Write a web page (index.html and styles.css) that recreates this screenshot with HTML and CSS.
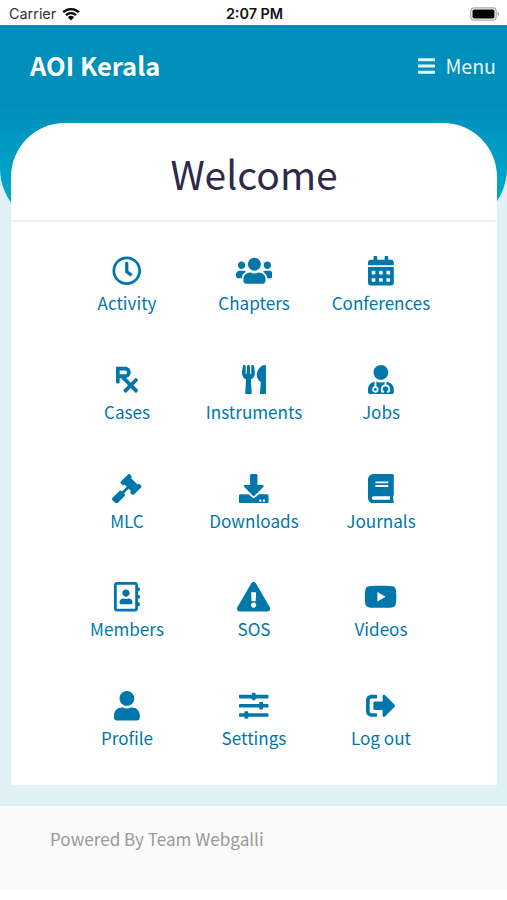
FILE: index.html
```
<!DOCTYPE html>
<html lang="en">
<head>
    <meta charset="UTF-8">
    <meta name="viewport" content="width=device-width, initial-scale=1.0">
    <title>AOI Kerala</title>
    <link rel="stylesheet" href="styles.css">
</head>
<body>
    <div class="status-bar">
        <div class="carrier">
            <span>Carrier</span>
            <svg class="wifi" viewBox="0 0 18 14">
                <path d="M1.2 5.2a11.2 11.2 0 0 1 15.6 0M4 8.2a7.2 7.2 0 0 1 10 0" fill="none" stroke="#000" stroke-width="2.3"/>
                <path d="M5.9 10.2a4.5 4.5 0 0 1 6.2 0L9 13.5z"/>
            </svg>
        </div>
        <div class="time">2:07 PM</div>
        <svg class="battery" viewBox="0 0 30 14">
            <rect x="0.8" y="0.8" width="25.4" height="12.4" rx="3.5" fill="#fff" stroke="#aaa" stroke-width="1.2"/>
            <rect x="2.5" y="2.4" width="22" height="9.2" rx="1.8"/>
            <path d="M27.6 4.8c2.2.6 2.2 3.8 0 4.4z" fill="#aaa"/>
        </svg>
    </div>

    <div class="page">
        <header class="header">
            <a class="brand">AOI Kerala</a>
            <a class="menu">
                <svg viewBox="0 0 448 512"><path d="M16 132h416c8.800 0 16-7.200 16-16V76c0-8.800-7.200-16-16-16H16C7.200 60 0 67.200 0 76v40c0 8.800 7.200 16 16 16zm0 160h416c8.800 0 16-7.200 16-16v-40c0-8.800-7.200-16-16-16H16c-8.800 0-16 7.200-16 16v40c0 8.800 7.200 16 16 16zm0 160h416c8.800 0 16-7.200 16-16v-40c0-8.800-7.200-16-16-16H16c-8.800 0-16 7.200-16 16v40c0 8.800 7.200 16 16 16z"/></svg>
                <span>Menu</span>
            </a>
        </header>

        <main class="card">
            <h1>Welcome</h1>
            <div class="grid">
                <a class="item">
                    <svg viewBox="0 0 512 512"><path d="M256 8C119 8 8 119 8 256s111 248 248 248 248-111 248-248S393 8 256 8zm0 448c-110.500 0-200-89.500-200-200S145.500 56 256 56s200 89.500 200 200-89.500 200-200 200zm61.800-104.400l-84.900-61.700c-3.100-2.300-4.900-5.900-4.900-9.700V116c0-6.600 5.400-12 12-12h32c6.600 0 12 5.400 12 12v141.700l66.800 48.600c5.400 3.900 6.500 11.400 2.600 16.800L334.600 349c-3.900 5.300-11.400 6.500-16.800 2.600z"/></svg>
                    <span>Activity</span>
                </a>
                <a class="item">
                    <svg viewBox="0 0 640 512"><path d="M96 224c35.300 0 64-28.700 64-64s-28.700-64-64-64-64 28.700-64 64 28.700 64 64 64zm448 0c35.300 0 64-28.700 64-64s-28.700-64-64-64-64 28.700-64 64 28.700 64 64 64zm32 32h-64c-17.600 0-33.500 7.100-45.100 18.600 40.300 22.100 68.900 62 75.100 109.400h66c17.700 0 32-14.300 32-32v-32c0-35.300-28.700-64-64-64zm-256 0c61.900 0 112-50.100 112-112S381.900 32 320 32 208 82.100 208 144s50.100 112 112 112zm76.800 32h-8.300c-20.800 10-43.900 16-68.500 16s-47.600-6-68.500-16h-8.300C179.600 288 128 339.600 128 403.200V432c0 26.500 21.500 48 48 48h288c26.500 0 48-21.500 48-48v-28.800c0-63.600-51.600-115.200-115.200-115.200zm-223.700-13.400C161.500 263.100 145.600 256 128 256H64c-35.300 0-64 28.700-64 64v32c0 17.700 14.300 32 32 32h65.900c6.300-47.400 34.900-87.300 75.200-109.400z"/></svg>
                    <span>Chapters</span>
                </a>
                <a class="item">
                    <svg viewBox="0 0 448 512"><path fill-rule="evenodd" d="M0 464c0 26.500 21.500 48 48 48h352c26.500 0 48-21.500 48-48V192H0v272zM76 256h40q12 0 12 12v40q0 12-12 12H76q-12 0-12-12v-40q0-12 12-12zm128 0h40q12 0 12 12v40q0 12-12 12h-40q-12 0-12-12v-40q0-12 12-12zm128 0h40q12 0 12 12v40q0 12-12 12h-40q-12 0-12-12v-40q0-12 12-12zM76 384h40q12 0 12 12v40q0 12-12 12H76q-12 0-12-12v-40q0-12 12-12zm128 0h40q12 0 12 12v40q0 12-12 12h-40q-12 0-12-12v-40q0-12 12-12zm128 0h40q12 0 12 12v40q0 12-12 12h-40q-12 0-12-12v-40q0-12 12-12zM400 64h-48V16c0-8.800-7.200-16-16-16h-32c-8.800 0-16 7.200-16 16v48H160V16c0-8.800-7.200-16-16-16h-32c-8.800 0-16 7.200-16 16v48H48C21.500 64 0 85.500 0 112v48h448v-48c0-26.500-21.500-48-48-48z"/></svg>
                    <span>Conferences</span>
                </a>
                <a class="item">
                    <svg viewBox="0 0 384 512"><path d="M301.300 352l78-78.100c6.300-6.200 6.300-16.300 0-22.600l-22.600-22.600c-6.300-6.300-16.400-6.300-22.600 0L256 306.700l-84-83.900c47.300-6 84-45.900 84-94.800 0-53-43-96-96-96H16C7.200 32 0 39.200 0 48v256c0 8.800 7.200 16 16 16h32c8.800 0 16-7.200 16-16v-80h18.700l128 128-78 78.100c-6.300 6.200-6.300 16.300 0 22.600l22.600 22.600c6.300 6.300 16.400 6.300 22.600 0l78.100-78 78.100 78c6.200 6.300 16.300 6.300 22.600 0l22.600-22.600c6.300-6.300 6.300-16.400 0-22.600L301.300 352zM64 96h96c17.600 0 32 14.400 32 32s-14.400 32-32 32H64V96z"/></svg>
                    <span>Cases</span>
                </a>
                <a class="item">
                    <svg viewBox="0 0 416 512"><path d="M207.900 15.200c.8 4.700 16.100 94.500 16.100 128.800 0 52.300-27.800 89.600-68.900 104.600L168 486.700c.7 13.700-10.200 25.300-24 25.300H80c-13.700 0-24.700-11.500-24-25.300l12.900-238.100C27.700 233.600 0 196.200 0 144 0 109.600 15.300 19.900 16.100 15.200 19.300-5.100 61.400-5.400 64 16.300v141.200c1.300 3.400 15.100 3.200 16 0 1.400-25.300 7.900-139.200 8-141.800 3.300-20.800 44.700-20.800 47.900 0 .2 2.700 6.600 116.500 8 141.800.9 3.200 14.800 3.400 16 0V16.300c2.600-21.600 44.800-21.400 48-1.100zm119.200 285.700l-15 185.100c-1.200 14 9.900 26 23.900 26h56c13.300 0 24-10.700 24-24V24c0-13.200-10.700-24-24-24-82.500 0-221.400 178.500-64.900 300.900z"/></svg>
                    <span>Instruments</span>
                </a>
                <a class="item">
                    <svg viewBox="0 0 448 512"><path d="M224 256c70.700 0 128-57.300 128-128S294.700 0 224 0 96 57.300 96 128s57.300 128 128 128zM104 424c0 13.300 10.700 24 24 24s24-10.700 24-24-10.700-24-24-24-24 10.700-24 24zm216-135.400v49c36.500 7.400 64 39.800 64 78.400v41.700c0 7.600-5.400 14.200-12.900 15.700l-32.200 6.400c-4.300.9-8.500-1.900-9.400-6.300l-3.100-15.700c-.9-4.300 1.900-8.600 6.300-9.400l19.300-3.900V416c0-62.800-96-65.100-96 1.900v26.700l19.300 3.900c4.300.9 7.100 5.100 6.300 9.400l-3.100 15.700c-.9 4.300-5.100 7.100-9.400 6.300l-31.200-4.200c-7.900-1.100-13.800-7.800-13.800-15.900V416c0-38.600 27.500-70.900 64-78.400v-45.200c-2.200.7-4.400 1.100-6.600 1.900-18 6.300-37.300 9.800-57.400 9.800s-39.400-3.500-57.400-9.800c-7.400-2.600-14.900-4.200-22.600-5.200v81.600c23.100 6.900 40 28.100 40 53.400 0 30.900-25.100 56-56 56s-56-25.100-56-56c0-25.300 16.900-46.500 40-53.400v-80.400C48.500 301 0 355.800 0 422.400v44.800C0 491.900 20.100 512 44.800 512h358.400c24.700 0 44.800-20.100 44.800-44.800v-44.800c0-72-56.800-130.300-128-133.800z"/></svg>
                    <span>Jobs</span>
                </a>
                <a class="item">
                    <svg viewBox="0 0 512 512"><path d="M505 199.400l-22.700-22.700c-9.300-9.300-24.500-9.300-33.900 0l-5.700 5.700L329.600 69.300l5.700-5.700c9.300-9.400 9.300-24.600 0-33.900L312.600 7c-9.300-9.300-24.500-9.300-33.900 0L154.200 131.500c-9.300 9.400-9.300 24.600 0 33.900l22.700 22.600c9.300 9.400 24.500 9.400 33.900 0l5.700-5.600 39.600 39.600-81.100 81-5.600-5.700c-12.500-12.500-32.800-12.500-45.300 0L9.400 412.100c-12.500 12.500-12.500 32.800 0 45.300l45.200 45.200c12.500 12.500 32.800 12.500 45.300 0l114.700-114.700c12.500-12.500 12.500-32.800 0-45.300l-5.600-5.600 81-81.100 39.600 39.600-5.700 5.700c-9.300 9.400-9.300 24.600 0 33.900l22.700 22.700c9.300 9.300 24.500 9.300 33.900 0L505 233.300c9.300-9.400 9.300-24.600 0-33.900z"/></svg>
                    <span>MLC</span>
                </a>
                <a class="item">
                    <svg viewBox="0 0 512 512"><path d="M216 0h80c13.300 0 24 10.700 24 24v168h87.700c17.800 0 26.700 21.500 14.100 34.100L269.700 378.300c-7.500 7.500-19.800 7.500-27.300 0L90.100 226.100c-12.600-12.600-3.700-34.100 14.100-34.100H192V24c0-13.300 10.700-24 24-24zm296 376v112c0 13.300-10.700 24-24 24H24c-13.300 0-24-10.700-24-24V376c0-13.300 10.700-24 24-24h146.700l49 49c20.100 20.100 52.500 20.100 72.600 0l49-49H488c13.300 0 24 10.700 24 24zm-124 88c0-11-9-20-20-20s-20 9-20 20 9 20 20 20 20-9 20-20zm64 0c0-11-9-20-20-20s-20 9-20 20 9 20 20 20 20-9 20-20z"/></svg>
                    <span>Downloads</span>
                </a>
                <a class="item">
                    <svg viewBox="0 0 448 512"><path d="M448 360V24c0-13.300-10.700-24-24-24H96C43 0 0 43 0 96v320c0 53 43 96 96 96h328c13.300 0 24-10.700 24-24v-16c0-7.500-3.500-14.300-8.900-18.700-4.200-15.400-4.200-59.300 0-74.700 5.400-4.300 8.900-11.100 8.900-18.600zM128 134c0-3.300 2.700-6 6-6h212c3.300 0 6 2.700 6 6v20c0 3.300-2.700 6-6 6H134c-3.300 0-6-2.700-6-6v-20zm0 64c0-3.300 2.700-6 6-6h212c3.300 0 6 2.700 6 6v20c0 3.300-2.700 6-6 6H134c-3.300 0-6-2.700-6-6v-20zm253.400 250H96c-17.700 0-32-14.300-32-32 0-17.600 14.400-32 32-32h285.400c-1.900 17.100-1.900 46.900 0 64z"/></svg>
                    <span>Journals</span>
                </a>
                <a class="item">
                    <svg viewBox="0 0 448 512"><path d="M436 160c6.600 0 12-5.400 12-12v-40c0-6.600-5.400-12-12-12h-20V48c0-26.500-21.500-48-48-48H48C21.500 0 0 21.500 0 48v416c0 26.500 21.500 48 48 48h320c26.500 0 48-21.500 48-48v-48h20c6.600 0 12-5.400 12-12v-40c0-6.600-5.400-12-12-12h-20v-64h20c6.600 0 12-5.400 12-12v-40c0-6.600-5.400-12-12-12h-20v-64h20zm-68 304H48V48h320v416zM208 256c35.300 0 64-28.700 64-64s-28.700-64-64-64-64 28.700-64 64 28.700 64 64 64zm-89.600 128h179.200c12.400 0 22.400-8.600 22.400-19.200v-19.200c0-31.800-30.100-57.600-67.200-57.600-10.800 0-18.700 8-44.800 8-26.900 0-33.400-8-44.800-8-37.100 0-67.200 25.800-67.200 57.600v19.200c0 10.600 10 19.200 22.400 19.200z"/></svg>
                    <span>Members</span>
                </a>
                <a class="item">
                    <svg viewBox="0 0 576 512"><path d="M569.500 440c18.500 32-4.700 72-41.600 72H48.100c-37 0-60-40.100-41.600-72L246.400 24c18.500-32 64.700-32 83.200 0l239.900 416zM288 354c-25.400 0-46 20.600-46 46s20.600 46 46 46 46-20.600 46-46-20.600-46-46-46zm-43.700-165.300l7.400 136c.4 6.300 5.700 11.300 12 11.300h48.600c6.300 0 11.600-5 12-11.300l7.400-136c.4-6.900-5.100-12.700-12-12.700h-63.400c-6.900 0-12.400 5.800-12 12.700z"/></svg>
                    <span>SOS</span>
                </a>
                <a class="item">
                    <svg viewBox="0 0 576 512"><path d="M549.700 124.100c-6.300-23.700-24.800-42.300-48.300-48.600C458.800 64 288 64 288 64S117.200 64 74.600 75.500c-23.500 6.300-42 24.900-48.300 48.600-11.400 42.900-11.400 132.300-11.400 132.300s0 89.400 11.400 132.300c6.300 23.700 24.800 41.500 48.300 47.800C117.200 448 288 448 288 448s170.800 0 213.400-11.500c23.500-6.300 42-24.100 48.300-47.800 11.400-42.900 11.400-132.300 11.400-132.300s0-89.400-11.400-132.300zM232.100 337.600V175.200l142.800 81.200-142.800 81.200z"/></svg>
                    <span>Videos</span>
                </a>
                <a class="item">
                    <svg viewBox="0 0 448 512"><path d="M224 256c70.700 0 128-57.300 128-128S294.700 0 224 0 96 57.300 96 128s57.300 128 128 128zm89.600 32h-16.700c-22.200 10.200-46.900 16-72.900 16s-50.600-5.800-72.900-16h-16.700C60.200 288 0 348.200 0 422.400V464c0 26.500 21.500 48 48 48h352c26.500 0 48-21.500 48-48v-41.600c0-74.200-60.200-134.400-134.400-134.400z"/></svg>
                    <span>Profile</span>
                </a>
                <a class="item">
                    <svg viewBox="0 0 512 512"><path d="M496 384H160v-16c0-8.800-7.200-16-16-16h-32c-8.800 0-16 7.200-16 16v16H16c-8.800 0-16 7.200-16 16v32c0 8.800 7.200 16 16 16h80v16c0 8.800 7.200 16 16 16h32c8.800 0 16-7.200 16-16v-16h336c8.800 0 16-7.200 16-16v-32c0-8.800-7.200-16-16-16zm0-160h-80v-16c0-8.800-7.200-16-16-16h-32c-8.800 0-16 7.200-16 16v16H16c-8.800 0-16 7.200-16 16v32c0 8.800 7.200 16 16 16h336v16c0 8.800 7.200 16 16 16h32c8.800 0 16-7.200 16-16v-16h80c8.800 0 16-7.200 16-16v-32c0-8.800-7.200-16-16-16zm0-160H288V48c0-8.800-7.200-16-16-16h-32c-8.800 0-16 7.200-16 16v16H16C7.200 64 0 71.200 0 80v32c0 8.800 7.200 16 16 16h208v16c0 8.800 7.200 16 16 16h32c8.800 0 16-7.200 16-16v-16h208c8.800 0 16-7.200 16-16V80c0-8.800-7.200-16-16-16z"/></svg>
                    <span>Settings</span>
                </a>
                <a class="item">
                    <svg viewBox="0 0 512 512"><path d="M497 273L329 441c-15 15-41 4.500-41-17v-96H152c-13.300 0-24-10.700-24-24v-96c0-13.300 10.700-24 24-24h136V88c0-21.400 25.900-32 41-17l168 168c9.300 9.400 9.300 24.600 0 34zM192 436v-40c0-6.600-5.400-12-12-12H96c-17.700 0-32-14.300-32-32V160c0-17.700 14.300-32 32-32h84c6.600 0 12-5.400 12-12V76c0-6.600-5.400-12-12-12H96c-53 0-96 43-96 96v192c0 53 43 96 96 96h84c6.600 0 12-5.400 12-12z"/></svg>
                    <span>Log out</span>
                </a>
            </div>
        </main>
    </div>

    <footer class="footer">Powered By Team Webgalli</footer>
</body>
</html>
```

FILE: styles.css
```
* {
    box-sizing: border-box;
}
body {
    margin: 0;
    background: #fff;
    font-family: "Noto Sans CJK SC", sans-serif;
}

/* Status bar */
.status-bar {
    display: grid;
    grid-template-columns: 1fr auto 1fr;
    align-items: center;
    height: 25px;
    padding: 2px 7px 0 9px;
    font-family: Inter, sans-serif;
    font-size: 14.4px;
    color: #111;
}
.carrier {
    display: flex;
    align-items: center;
    gap: 6px;
    color: #333;
}
.wifi {
    width: 18px;
    height: 14px;
}
.time {
    font-weight: 600;
}
.battery {
    width: 30px;
    height: 14px;
    justify-self: end;
}

/* Header */
.page {
    height: 780px;
    background: #dff1f5;
}
.header {
    display: flex;
    justify-content: space-between;
    height: 203px;
    padding: 0 11px 0 30px;
    line-height: 80px;
    color: #fff;
    background: linear-gradient(#008fbb 40%, #00b0d0);
    border-radius: 0 0 60px 60px;
}
.brand {
    font-size: 25.5px;
    font-weight: bold;
}
.menu {
    display: flex;
    align-items: center;
    gap: 10px;
    height: 81px;
    font-size: 19.6px;
    color: #e4f7fc;
}
.menu svg {
    height: 20px;
    fill: currentColor;
}

/* Card */
.card {
    height: 662px;
    margin: -105px 10px 0 11px;
    background: #fff;
    border-radius: 54px 54px 0 0;
}
h1 {
    height: 99px;
    margin: 0;
    border-bottom: 2px solid #f0f1f2;
    text-align: center;
    font-size: 39px;
    font-weight: normal;
    line-height: 101px;
    color: #2d2a4a;
}
.grid {
    display: grid;
    grid-template-columns: repeat(3, 127px);
    grid-auto-rows: 108.75px;
    justify-content: center;
    padding-top: 34px;
}
.item {
    display: flex;
    flex-direction: column;
    align-items: center;
    font-size: 17.1px;
    line-height: 26px;
    color: #0077ab;
}
.item svg {
    height: 29.5px;
    margin-bottom: 4.5px;
    fill: currentColor;
}

/* Footer */
.footer {
    height: 84px;
    padding: 20px 50px;
    border-top: 1px solid #e2eaed;
    background: #fafafa;
    font-size: 17.1px;
    line-height: 26px;
    color: #999;
}
```
